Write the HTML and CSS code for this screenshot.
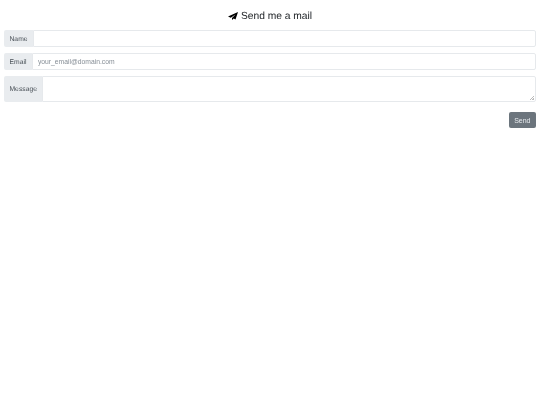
FILE: index.html
```html
<!DOCTYPE html>
<html lang="en">
<head>
    <meta charset="UTF-8">
    <meta name="viewport" content="width=device-width, initial-scale=1.0">
    <title>Send me a mail</title>
    <link rel="stylesheet" href="styles.css">
</head>
<body>
    <h1 class="title">
        <svg class="title-icon" viewBox="0 0 20 16"><path d="M20 0L0 9l5.5 2.5L15 5l-7 7v4l3.5-3 3.5 2z"/></svg>
        Send me a mail
    </h1>
    <form class="mail-form">
        <div class="input-group">
            <label class="addon">Name</label>
            <input class="field" type="text">
        </div>
        <div class="input-group">
            <label class="addon">Email</label>
            <input class="field" type="text" placeholder="your_email@domain.com">
        </div>
        <div class="input-group">
            <label class="addon">Message</label>
            <textarea class="field message"></textarea>
        </div>
        <div class="actions">
            <button class="button" type="button">Send</button>
        </div>
    </form>
</body>
</html>
```

FILE: styles.css
```css
body {
    font-family: "Liberation Sans", Arial, sans-serif;
    margin: 0;
    padding: 0 4px;
    background-color: #fff;
    color: #212529;
    text-rendering: geometricPrecision;
    will-change: transform;
}
.title {
    display: flex;
    justify-content: center;
    align-items: center;
    gap: 3px;
    margin: 0;
    padding-top: 2px;
    height: 28px;
    font-size: 10.25px;
    font-weight: 400;
}
.title-icon {
    width: 10px;
    height: 8px;
}
.input-group {
    display: flex;
    margin-bottom: 6px;
}
.addon {
    display: flex;
    align-items: center;
    padding: 1px 5.5px 0;
    font-size: 6.75px;
    color: #495057;
    background-color: #e9ecef;
    border-radius: 2px 0 0 2px;
}
.field {
    flex: 1;
    min-width: 0;
    height: 17px;
    box-sizing: border-box;
    margin: 0;
    padding: 0 5px;
    font-family: inherit;
    font-size: 6.75px;
    color: #495057;
    border: 1px solid #e6e9ec;
    border-radius: 0 2px 2px 0;
    outline: none;
}
.field::placeholder {
    color: #868e96;
    padding-bottom: 2px;
    overflow: visible;
}
.message {
    display: block;
    height: 26px;
    resize: none;
    background: linear-gradient(135deg, transparent 55%, #bbb 55%, #bbb 65%, transparent 65%, transparent 80%, #bbb 80%) no-repeat right 1px bottom 1px / 5px 5px;
}
.actions {
    display: flex;
    justify-content: flex-end;
    margin-top: 10px;
}
.button {
    height: 16px;
    padding: 0 5.5px;
    font-family: inherit;
    font-size: 7px;
    color: #e9ecef;
    background-color: #6c757d;
    border: none;
    border-radius: 2px;
}
```
